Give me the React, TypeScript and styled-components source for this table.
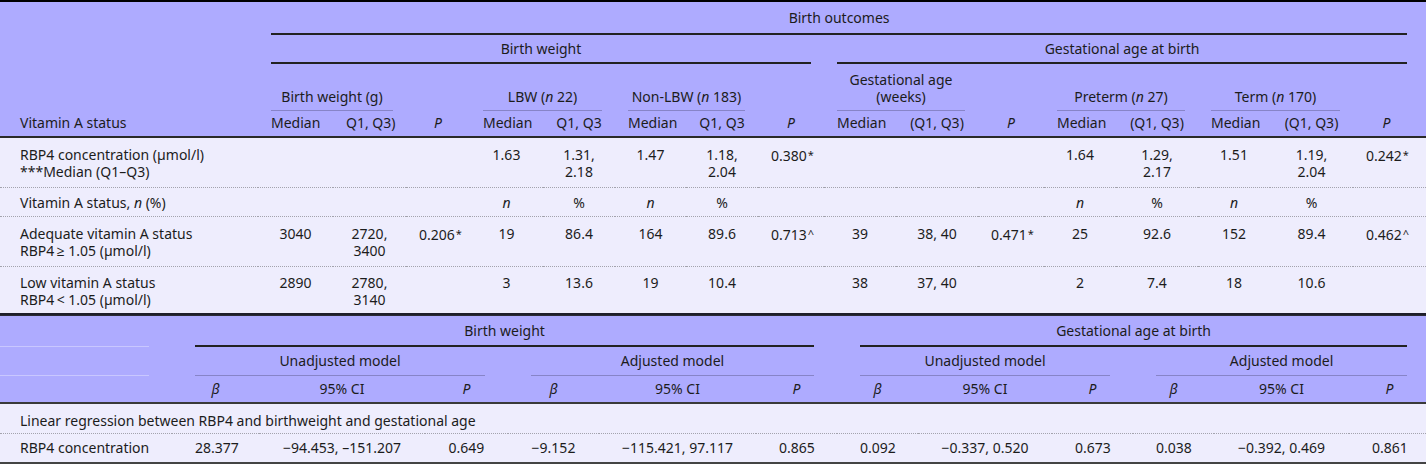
import React from "react";
import styled, { createGlobalStyle, css } from "styled-components";

const GlobalStyle = createGlobalStyle`
  html, body {
    margin: 0;
    padding: 0;
    background: #ffffff;
  }
  body {
    font-family: "Noto Sans", "Open Sans", "Liberation Sans", sans-serif;
    font-size: 14px;
    color: #1c1c1c;
  }
`;

type Rule = "strong" | "thin" | "faint";

const rules: Record<Rule, string> = {
  strong: "2px solid #222222",
  thin: "1px solid #8784c8",
  faint: "1px solid #c9c7ff",
};

const Page = styled.div`
  width: 1426px;
  display: flex;
  flex-direction: column;
`;

const Frame = styled.div<{ $top: string; $bottom: string }>`
  border-top: ${(p) => p.$top};
  border-bottom: ${(p) => p.$bottom};
`;

const Table = styled.table<{ $gutter: number }>`
  --gutter: ${(p) => p.$gutter}px;
  width: 100%;
  table-layout: fixed;
  border-collapse: collapse;
  line-height: 17px;
`;

const Col = styled.col<{ $w: number }>`
  width: ${(p) => p.$w}px;
`;

const Head = styled.thead<{ $rule: string }>`
  background: #aeabff;
  border-bottom: 2px solid ${(p) => p.$rule};
`;

const Body = styled.tbody`
  background: #eeedfd;
`;

const Row = styled.tr<{ $dotted?: boolean }>`
  ${(p) =>
    p.$dotted &&
    css`
      border-bottom: 1px dotted #a3a3ad;
    `}
`;

const Th = styled.th<{ $stub?: boolean }>`
  padding: 0 var(--gutter);
  font-weight: 400;
  text-align: ${(p) => (p.$stub ? "left" : "center")};
  vertical-align: bottom;
  ${(p) =>
    p.$stub &&
    css`
      padding-left: 20px;
    `}
  &:last-child {
    padding-right: 19px;
  }
`;

/* empty stub cell of the regression header: its faint rule runs from the page edge */
const BlankStub = styled(Th)`
  padding-left: 0;
`;

const Label = styled.div<{ $pt: number; $pb: number; $rule?: Rule }>`
  padding: ${(p) => p.$pt}px 0 ${(p) => p.$pb}px;
  border-bottom: ${(p) => (p.$rule ? rules[p.$rule] : "none")};
  white-space: nowrap;
`;

const Td = styled.td<{ $stub?: boolean; $pt: number; $pb: number }>`
  padding: ${(p) => p.$pt}px var(--gutter) ${(p) => p.$pb}px;
  text-align: ${(p) => (p.$stub ? "left" : "center")};
  vertical-align: top;
  white-space: nowrap;
  ${(p) =>
    p.$stub &&
    css`
      padding-left: 20px;
    `}
  &:last-child {
    padding-right: 19px;
  }
`;

const I = styled.i`
  font-style: italic;
`;

/* footnote marks after P values (* and ^) */
const Mark = styled.span`
  font-size: 11px;
  vertical-align: 2px;
  margin-left: 1px;
`;

const pv = (value: string, mark: string) => (
  <>
    {value}
    <Mark>{mark}</Mark>
  </>
);

type HeadCell = { text?: React.ReactNode; span?: number; rule?: Rule };
type HeadRow = { pt: number; pb: number; stub?: Rule | "none"; cells: HeadCell[] };
type BodyRow = { pt: number; pb: number; cells: React.ReactNode[]; span?: boolean };

/* ---------- outcomes by vitamin A status ---------- */

const statusCols = [258, 75, 73, 64, 73, 72, 71, 72, 66, 72, 82, 66, 72, 82, 72, 83, 73];

const statusHead: HeadRow[] = [
  { pt: 7, pb: 7, cells: [{ text: "Birth outcomes", span: 16, rule: "strong" }] },
  {
    pt: 5,
    pb: 5,
    cells: [
      { text: "Birth weight", span: 8, rule: "strong" },
      { text: "Gestational age at birth", span: 8, rule: "strong" },
    ],
  },
  {
    pt: 7,
    pb: 5,
    cells: [
      { text: "Birth weight (g)", span: 2, rule: "thin" },
      {},
      { text: <>LBW (<I>n</I> 22)</>, span: 2, rule: "thin" },
      { text: <>Non-LBW (<I>n</I> 183)</>, span: 2, rule: "thin" },
      {},
      { text: <>Gestational age<br />(weeks)</>, span: 2, rule: "thin" },
      {},
      { text: <>Preterm (<I>n</I> 27)</>, span: 2, rule: "thin" },
      { text: <>Term (<I>n</I> 170)</>, span: 2, rule: "thin" },
      {},
    ],
  },
  {
    pt: 3,
    pb: 5,
    cells: [
      "Median", "Q1, Q3)", <I>P</I>,
      "Median", "Q1, Q3", "Median", "Q1, Q3", <I>P</I>,
      "Median", "(Q1, Q3)", <I>P</I>,
      "Median", "(Q1, Q3)", "Median", "(Q1, Q3)", <I>P</I>,
    ].map((text) => ({ text })),
  },
];

const statusBody: BodyRow[] = [
  {
    pt: 8,
    pb: 7,
    cells: [
      <>RBP4 concentration (µmol/l)<br />***Median (Q1–Q3)</>,
      "", "", "",
      "1.63", <>1.31,<br />2.18</>, "1.47", <>1.18,<br />2.04</>, pv("0.380", "*"),
      "", "", "",
      "1.64", <>1.29,<br />2.17</>, "1.51", <>1.19,<br />2.04</>, pv("0.242", "*"),
    ],
  },
  {
    pt: 6,
    pb: 5,
    cells: [
      <>Vitamin A status, <I>n</I> (%)</>,
      "", "", "",
      <I>n</I>, "%", <I>n</I>, "%", "",
      "", "", "",
      <I>n</I>, "%", <I>n</I>, "%", "",
    ],
  },
  {
    pt: 8,
    pb: 7,
    cells: [
      <>Adequate vitamin A status<br />RBP4{"\u2009"}≥ 1.05 (µmol/l)</>,
      "3040", <>2720,<br />3400</>, pv("0.206", "*"),
      "19", "86.4", "164", "89.6", pv("0.713", "^"),
      "39", "38, 40", pv("0.471", "*"),
      "25", "92.6", "152", "89.4", pv("0.462", "^"),
    ],
  },
  {
    pt: 7,
    pb: 5,
    cells: [
      <>Low vitamin A status<br />RBP4{"\u2009"}&lt; 1.05 (µmol/l)</>,
      "2890", <>2780,<br />3140</>, "",
      "3", "13.6", "19", "10.4", "",
      "38", "37, 40", "",
      "2", "7.4", "18", "10.6", "",
    ],
  },
];

/* ---------- linear regression ---------- */

const regressionCols = [172, 87, 166, 83, 91, 157, 81, 81, 134, 81, 81, 135, 77];

const modelCells = (label: string): HeadCell => ({ text: label, span: 3, rule: "thin" });
const coefCells: HeadCell[] = [<I>β</I>, "95% CI", <I>P</I>].map((text) => ({ text }));

const regressionHead: HeadRow[] = [
  {
    pt: 6,
    pb: 6,
    stub: "faint",
    cells: [
      { text: "Birth weight", span: 6, rule: "strong" },
      { text: "Gestational age at birth", span: 6, rule: "strong" },
    ],
  },
  {
    pt: 5,
    pb: 6,
    stub: "faint",
    cells: [
      modelCells("Unadjusted model"),
      modelCells("Adjusted model"),
      modelCells("Unadjusted model"),
      modelCells("Adjusted model"),
    ],
  },
  { pt: 4, pb: 5, stub: "none", cells: [...coefCells, ...coefCells, ...coefCells, ...coefCells] },
];

const regressionBody: BodyRow[] = [
  {
    pt: 8,
    pb: 4,
    span: true,
    cells: ["Linear regression between RBP4 and birthweight and gestational age"],
  },
  {
    pt: 5,
    pb: 6,
    cells: [
      "RBP4 concentration",
      "28.377", "−94.453, –151.207", "0.649",
      "−9.152", "−115.421, 97.117", "0.865",
      "0.092", "−0.337, 0.520", "0.673",
      "0.038", "−0.392, 0.469", "0.861",
    ],
  },
];

const HeadRows: React.FC<{ rows: HeadRow[]; stubTitle?: string }> = ({ rows, stubTitle }) => (
  <>
    {rows.map((row, r) => (
      <tr key={r}>
        {stubTitle !== undefined && r === 0 && (
          <Th $stub rowSpan={rows.length}>
            <Label $pt={0} $pb={5}>{stubTitle}</Label>
          </Th>
        )}
        {row.stub && (
          <BlankStub>
            <Label $pt={0} $pb={0} $rule={row.stub === "none" ? undefined : row.stub} />
          </BlankStub>
        )}
        {row.cells.map((c, i) => (
          <Th key={i} colSpan={c.span}>
            {c.text !== undefined && (
              <Label $pt={row.pt} $pb={row.pb} $rule={c.rule}>
                {c.text}
              </Label>
            )}
          </Th>
        ))}
      </tr>
    ))}
  </>
);

const BodyRows: React.FC<{ rows: BodyRow[]; cols: number }> = ({ rows, cols }) => (
  <>
    {rows.map((row, r) => (
      <Row key={r} $dotted={r < rows.length - 1}>
        {row.cells.map((c, i) => (
          <Td
            key={i}
            $stub={i === 0}
            $pt={row.pt}
            $pb={row.pb}
            colSpan={row.span ? cols : undefined}
          >
            {c}
          </Td>
        ))}
      </Row>
    ))}
  </>
);

const App: React.FC = () => (
  <Page>
    <GlobalStyle />
    <Frame $top="2px solid #000000" $bottom="2px solid #1e1e2a">
      <Table $gutter={13}>
        <colgroup>
          {statusCols.map((w, i) => (
            <Col key={i} $w={w} />
          ))}
        </colgroup>
        <Head $rule="#2a2a2a">
          <HeadRows rows={statusHead} stubTitle="Vitamin A status" />
        </Head>
        <Body>
          <BodyRows rows={statusBody} cols={statusCols.length} />
        </Body>
      </Table>
    </Frame>
    <Frame $top="1px solid #2a2a36" $bottom="2px solid #444444">
      <Table $gutter={23}>
        <colgroup>
          {regressionCols.map((w, i) => (
            <Col key={i} $w={w} />
          ))}
        </colgroup>
        <Head $rule="#3a3a3a">
          <HeadRows rows={regressionHead} />
        </Head>
        <Body>
          <BodyRows rows={regressionBody} cols={regressionCols.length} />
        </Body>
      </Table>
    </Frame>
  </Page>
);

export default App;
